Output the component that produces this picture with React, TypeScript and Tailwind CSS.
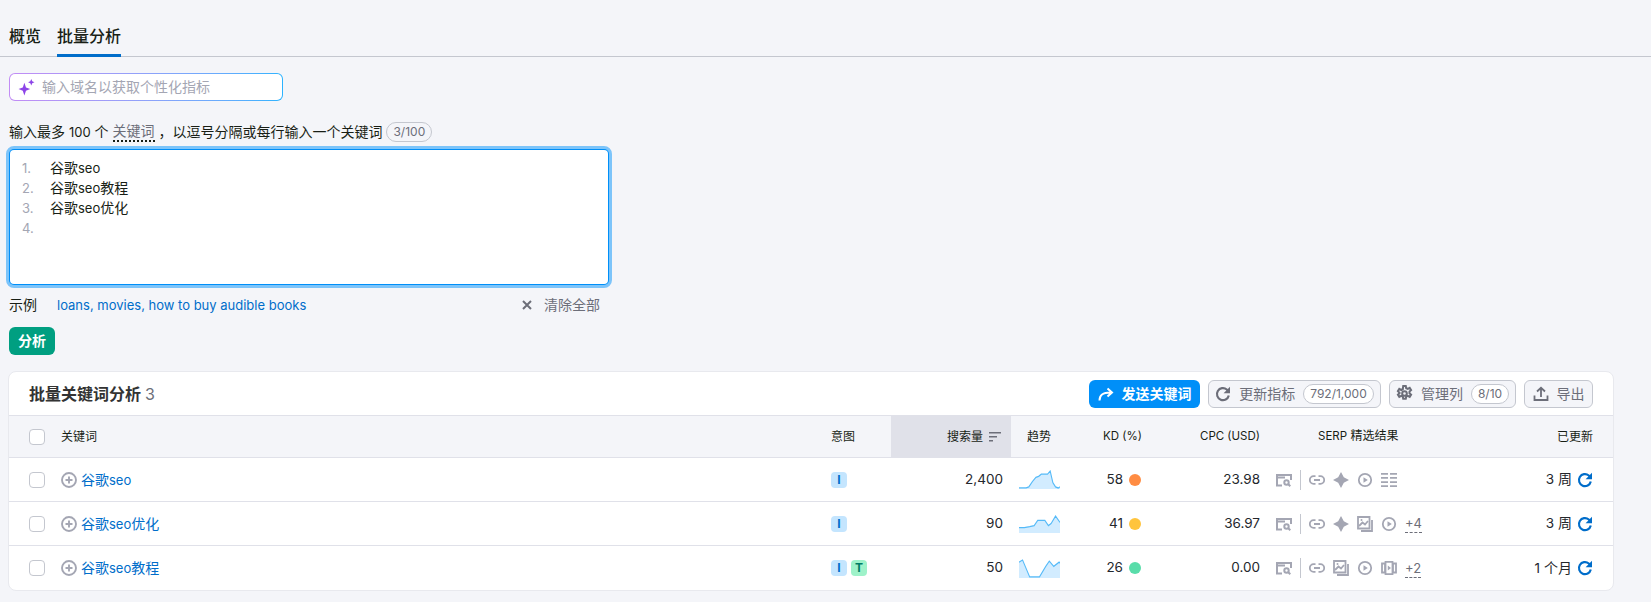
const cjk = "font-['Inter','Noto_Sans_CJK_SC',sans-serif]";

type Row = {
  name: string;
  suffix?: string;
  intents: string[];
  volume: string;
  trend: string;
  kd: number;
  kdColor: string;
  cpc: string;
  serp: string[];
  more?: string;
  updated: string;
};

const rows: Row[] = [
  {
    name: "seo",
    intents: ["I"],
    volume: "2,400",
    trend: "0,17 8,17 11,16 15,11 19,7 22,6 25,4 32,4 35,1 38,12 41,16 44,17 46,16",
    kd: 58,
    kdColor: "bg-[#ff8c43]",
    cpc: "23.98",
    serp: ["link", "spark", "play", "list"],
    updated: "3 周"
  },
  {
    name: "seo",
    suffix: "优化",
    intents: ["I"],
    volume: "90",
    trend: "0,13 6,13 12,12 17,11 21,6 29,6 33,11 36,9 41,2 46,8",
    kd: 41,
    kdColor: "bg-[#ffc43d]",
    cpc: "36.97",
    serp: ["link", "spark", "image", "play"],
    more: "+4",
    updated: "3 周"
  },
  {
    name: "seo",
    suffix: "教程",
    intents: ["I", "T"],
    volume: "50",
    trend: "0,3 4,1 12,17 23,17 30,7 34,2 39,7 45,3 46,4",
    kd: 26,
    kdColor: "bg-[#59ddaa]",
    cpc: "0.00",
    serp: ["link", "image", "play", "video"],
    more: "+2",
    updated: "1 个月"
  }
];

function SerpIcon({ name }: { name: string }) {
  const color = "#a4a6b3";
  if (name === "link") {
    return (
      <svg width="16" height="16" viewBox="0 0 16 16" fill="none" stroke={color} strokeWidth="1.8">
        <path d="M6.500 4.200H4.600a3.800 3.800 0 0 0 0 7.600h1.900M9.500 4.200h1.900a3.800 3.800 0 0 1 0 7.600H9.500M5 8h6" />
      </svg>
    );
  }
  if (name === "spark") {
    return (
      <svg width="16" height="16" viewBox="0 0 16 16" fill={color}>
        <path d="M8 0 10.800 5.200 16 8 10.800 10.800 8 16 5.200 10.800 0 8 5.200 5.200z" />
      </svg>
    );
  }
  if (name === "play") {
    return (
      <svg width="16" height="16" viewBox="0 0 16 16" fill="none" stroke={color} strokeWidth="1.8">
        <circle cx="8" cy="8" r="6.200" />
        <path d="M6.500 5.300 10.800 8l-4.300 2.700z" fill={color} stroke="none" />
      </svg>
    );
  }
  if (name === "list") {
    return (
      <svg width="16" height="16" viewBox="0 0 16 16" fill={color}>
        <path d="M0 1h7v1.700H0zM9 1h7v1.700H9zM0 5h7v1.700H0zM9 5h7v1.700H9zM0 9.300h7V11H0zM9 9.300h7V11H9zM0 13.300h7V15H0zM9 13.300h7V15H9z" />
      </svg>
    );
  }
  if (name === "image") {
    return (
      <svg width="16" height="16" viewBox="0 0 16 16" fill="none" stroke={color} strokeWidth="1.800">
        <path d="M1 1h11.500v11.500H1zM15 4v11H4" />
        <path d="m2 10 3.500-3.500L8 8.500l3-3.500" />
        <circle cx="4.500" cy="4" r="1" fill={color} stroke="none" />
      </svg>
    );
  }
  return (
    <svg width="16" height="16" viewBox="0 0 16 16" fill="none" stroke={color} strokeWidth="1.800">
      <path d="M1 3.500h3v9H1zM4.500 1.800h7v12.400h-7zM12 3.500h3v9h-3z" />
      <path d="M6.800 5.500 10 8l-3.200 2.500z" fill={color} stroke="none" />
    </svg>
  );
}

function Sparkline({ points }: { points: string }) {
  return (
    <svg width="41" height="19" viewBox="0 0 46 18" preserveAspectRatio="none">
      <polygon points={`0,18 ${points} 46,18`} fill="#d2ecff" />
      <polyline points={points} fill="none" stroke="#55baf8" strokeWidth="1.200" />
    </svg>
  );
}

function Refresh({ color }: { color: string }) {
  return (
    <svg width="16" height="16" viewBox="0 0 16 16" fill="none" stroke={color} strokeWidth="2.200">
      <path d="M13.800 9.500A6 6 0 1 1 11.800 3.500L14 5.800" />
      <path d="M15 .8v6.400H8.600z" fill={color} stroke="none" />
    </svg>
  );
}

function CheckBox() {
  return <span className="block h-4 w-4 rounded-[4px] border border-[#c4c7cf] bg-white" />;
}

function Tag({ letter }: { letter: string }) {
  const style =
    letter === "I" ? "bg-[#c4e5fe] text-[#006dca]" : "bg-[#9ef2c9] text-[#007c65]";
  return (
    <span className={`flex h-4 w-4 items-center justify-center rounded-[4px] text-[12px] font-bold ${style}`}>
      {letter}
    </span>
  );
}

export default function App() {
  return (
    <div className={`h-[602px] w-[1651px] overflow-hidden bg-[#f4f5f9] text-sm text-[#181e15] ${cjk}`}>
      <div className="flex h-[57px] items-end gap-4 border-b border-[#c4c7cf] pl-[9px]">
        {["概览", "批量分析"].map((tab, i) => (
          <div
            key={tab}
            className={`-mb-px h-[31px] text-base font-medium leading-5 ${i === 1 ? "border-b-[3px] border-[#006dca]" : ""}`}
          >
            {tab}
          </div>
        ))}
      </div>

      <div className="px-[9px]">
        <div className="mt-4 h-7 w-[274px] rounded-md bg-gradient-to-r from-[#c28cf5] to-[#2bb3ff] p-px">
          <div className="flex h-full items-center gap-[7px] rounded-[5px] bg-white pl-[8px] text-[#a4a6b3]">
            <svg width="17" height="17" viewBox="0 0 16 16" fill="#8d45e8">
              <path d="M6 3.500 7.500 8 11.500 9.500 7.500 11 6 15.500 4.500 11 .5 9.500 4.500 8z" />
              <path d="M12.500 0 13.400 2.100 15.500 3 13.400 3.900 12.500 6 11.600 3.900 9.500 3 11.600 2.100z" />
            </svg>
            <span>输入域名以获取个性化指标</span>
          </div>
        </div>

        <div className="mt-[21px] flex h-5 items-center">
          <span>
            输入最多 <span className="text-[13px]">100</span> 个&nbsp;
          </span>
          <span className="border-b-2 border-dotted border-[#181e15] leading-[18px] text-[#6c6e79]">关键词</span>
          <span>&nbsp;，以逗号分隔或每行输入一个关键词</span>
          <span className="ml-1 rounded-full border border-[#c4c7cf] px-[6px] text-xs leading-[18px] text-[#6c6e79]">3/100</span>
        </div>

        <div className="-ml-[3px] mt-1 h-[142px] w-[606px] rounded-lg border-[3px] border-[#7cc4fa] bg-[#008ff8] p-px">
          <div className="flex h-full rounded-[4px] bg-white pl-3 pt-2 leading-5">
            <div className="w-[28px] text-[#a4a6b3]">
              <div className="text-[13px]">1.</div>
              <div className="text-[13px]">2.</div>
              <div className="text-[13px]">3.</div>
              <div className="text-[13px]">4.</div>
            </div>
            <div>
              <div>谷歌<span className="text-[13px]">seo</span></div>
              <div>谷歌<span className="text-[13px]">seo</span>教程</div>
              <div>谷歌<span className="text-[13px]">seo</span>优化</div>
            </div>
          </div>
        </div>

        <div className="mt-[7px] flex h-5 w-[591px] items-center">
          <span className="w-12">示例</span>
          <span className="text-[13px] text-[#006dca]">loans, movies, how to buy audible books</span>
          <span className="ml-auto flex items-center gap-[11px] text-[#6c6e79]">
            <svg width="12" height="12" viewBox="0 0 12 12" fill="none" stroke="#6c6e79" strokeWidth="2">
              <path d="m2 2 8 8M10 2l-8 8" />
            </svg>
            清除全部
          </span>
        </div>

        <button className="mt-3 block h-7 w-[46px] rounded-md bg-[#009f81] font-semibold text-white">
          分析
        </button>

        <div className="-ml-px mt-4 w-[1606px] overflow-hidden rounded-lg border border-[#e8e9ee] bg-white">
          <div className="flex h-[43px] items-center pl-5 pr-5">
            <div className="text-base font-semibold text-[#333]">
              批量关键词分析 <span className="font-normal text-[#6c6e79]">3</span>
            </div>
            <div className="ml-auto flex items-center gap-2">
              <button className="flex h-7 w-[111px] items-center justify-center gap-2 rounded-md bg-[#008ff8] font-semibold text-white">
                <svg width="16" height="16" viewBox="0 0 16 16" fill="none" stroke="#fff" strokeWidth="2">
                  <path d="M1.500 14.500c0-5.500 3-8 11-8M9.500 2.500l4.500 4-4.500 4" />
                </svg>
                发送关键词
              </button>
              <button className="flex h-7 w-[173px] items-center justify-center gap-2 rounded-md border border-[#c4c7cf] bg-[#f4f5f9] text-[#6c6e79]">
                <Refresh color="#6c6e79" />
                更新指标
                <span className="rounded-full border border-[#c4c7cf] bg-white px-[6px] text-xs leading-[18px]">792/1,000</span>
              </button>
              <button className="flex h-7 w-[127px] items-center justify-center gap-2 rounded-md border border-[#c4c7cf] bg-[#f4f5f9] text-[#6c6e79]">
                <svg width="17" height="17" viewBox="0 0 16 16" fill="none" stroke="#6c6e79" strokeWidth="1.900">
                  <circle cx="8" cy="8" r="2.200" />
                  <path d="M6.800 1h2.400l.4 2 1.500.7 1.800-1 1.300 2.100-1.500 1.400v1.600l1.500 1.400-1.300 2.100-1.800-1-1.500.7-.4 2H6.800l-.4-2-1.500-.7-1.800 1-1.300-2.100 1.500-1.400V7.200L1.800 5.800l1.300-2.100 1.800 1 1.500-.7z" />
                </svg>
                管理列
                <span className="rounded-full border border-[#c4c7cf] bg-white px-[6px] text-xs leading-[18px]">8/10</span>
              </button>
              <button className="flex h-7 w-[69px] items-center justify-center gap-2 rounded-md border border-[#c4c7cf] bg-[#f4f5f9] text-[#6c6e79]">
                <svg width="16" height="16" viewBox="0 0 16 16" fill="none" stroke="#6c6e79" strokeWidth="1.800">
                  <path d="M1.500 9.500V14h13V9.500M8 11V2M4 5.500 8 1.800l4 3.700" />
                </svg>
                导出
              </button>
            </div>
          </div>

          <div className="flex h-[43px] items-center border-y border-[#e0e1e9] bg-[#f4f5f9] text-xs">
            <div className="flex w-[822px] items-center">
              <div className="ml-5 w-8"><CheckBox /></div>
              <span>关键词</span>
            </div>
            <div className="w-[60px]">意图</div>
            <div className="flex h-full w-[120px] items-center justify-end gap-[6px] bg-[#e0e1e9] pr-[10px]">
              搜索量
              <svg width="12" height="10" viewBox="0 0 12 10" fill="#6c6e79">
                <path d="M0 0h12v1.500H0zM0 4h8v1.500H0zM0 8h4v1.500H0z" />
              </svg>
            </div>
            <div className="w-[92px] pl-4">趋势</div>
            <div className="w-[37px] whitespace-nowrap text-[11.5px]">KD (%)</div>
            <div className="w-[120px] text-right text-[11.5px]">CPC (USD)</div>
            <div className="ml-[58px]"><span className="text-[11.5px]">SERP</span> 精选结果</div>
            <div className="ml-auto pr-5">已更新</div>
          </div>

          {rows.map((row, index) => (
            <div
              key={row.name + (row.suffix ?? "")}
              className={`flex h-11 items-center text-[#24272c] ${index < rows.length - 1 ? "border-b border-[#e0e1e9]" : ""}`}
            >
              <div className="flex w-[822px] items-center">
                <div className="ml-5 w-8"><CheckBox /></div>
                <svg width="16" height="16" viewBox="0 0 16 16" fill="none" stroke="#a4a6b3" strokeWidth="1.900">
                  <circle cx="8" cy="8" r="7" />
                  <path d="M8 4.500v7M4.500 8h7" />
                </svg>
                <span className="ml-1 text-[#006dca]">
                  谷歌<span className="text-[13px]">{row.name}</span>{row.suffix}
                </span>
              </div>
              <div className="flex w-[60px] gap-1">
                {row.intents.map((letter) => (
                  <Tag key={letter} letter={letter} />
                ))}
              </div>
              <div className="w-[120px] pr-2 text-right text-[13.5px]">{row.volume}</div>
              <div className="flex w-[89px] items-center pl-2">
                <Sparkline points={row.trend} />
              </div>
              <div className="flex w-[41px] items-center justify-end gap-[6px] text-[13.5px]">
                {row.kd}
                <span className={`block h-3 w-3 rounded-full ${row.kdColor}`} />
              </div>
              <div className="w-[119px] text-right text-[13.5px]">{row.cpc}</div>
              <div className="ml-4 flex items-center">
                <svg width="16" height="16" viewBox="0 0 16 16" fill="none" stroke="#a4a6b3" strokeWidth="2">
                  <path d="M6 13.500H1V3h14v5M1 5.500h8" />
                  <circle cx="10.500" cy="10.500" r="2.200" />
                  <path d="m12.300 12.300 2 2" />
                </svg>
                <span className="mx-2 h-5 w-px bg-[#c4c7cf]" />
                <span className="flex items-center gap-2">
                  {row.serp.map((name) => (
                    <SerpIcon key={name} name={name} />
                  ))}
                </span>
                {row.more && (
                  <span className="ml-2 border-b border-dashed border-[#6c6e79] text-[13px] leading-[18px] text-[#6c6e79]">{row.more}</span>
                )}
              </div>
              <div className="ml-auto flex items-center gap-[5px] pr-5">
                <span>
                  <span className="text-[13.5px]">{row.updated.split(" ")[0]}</span> {row.updated.split(" ")[1]}
                </span>
                <Refresh color="#006dca" />
              </div>
            </div>
          ))}
        </div>
      </div>
    </div>
  );
}
